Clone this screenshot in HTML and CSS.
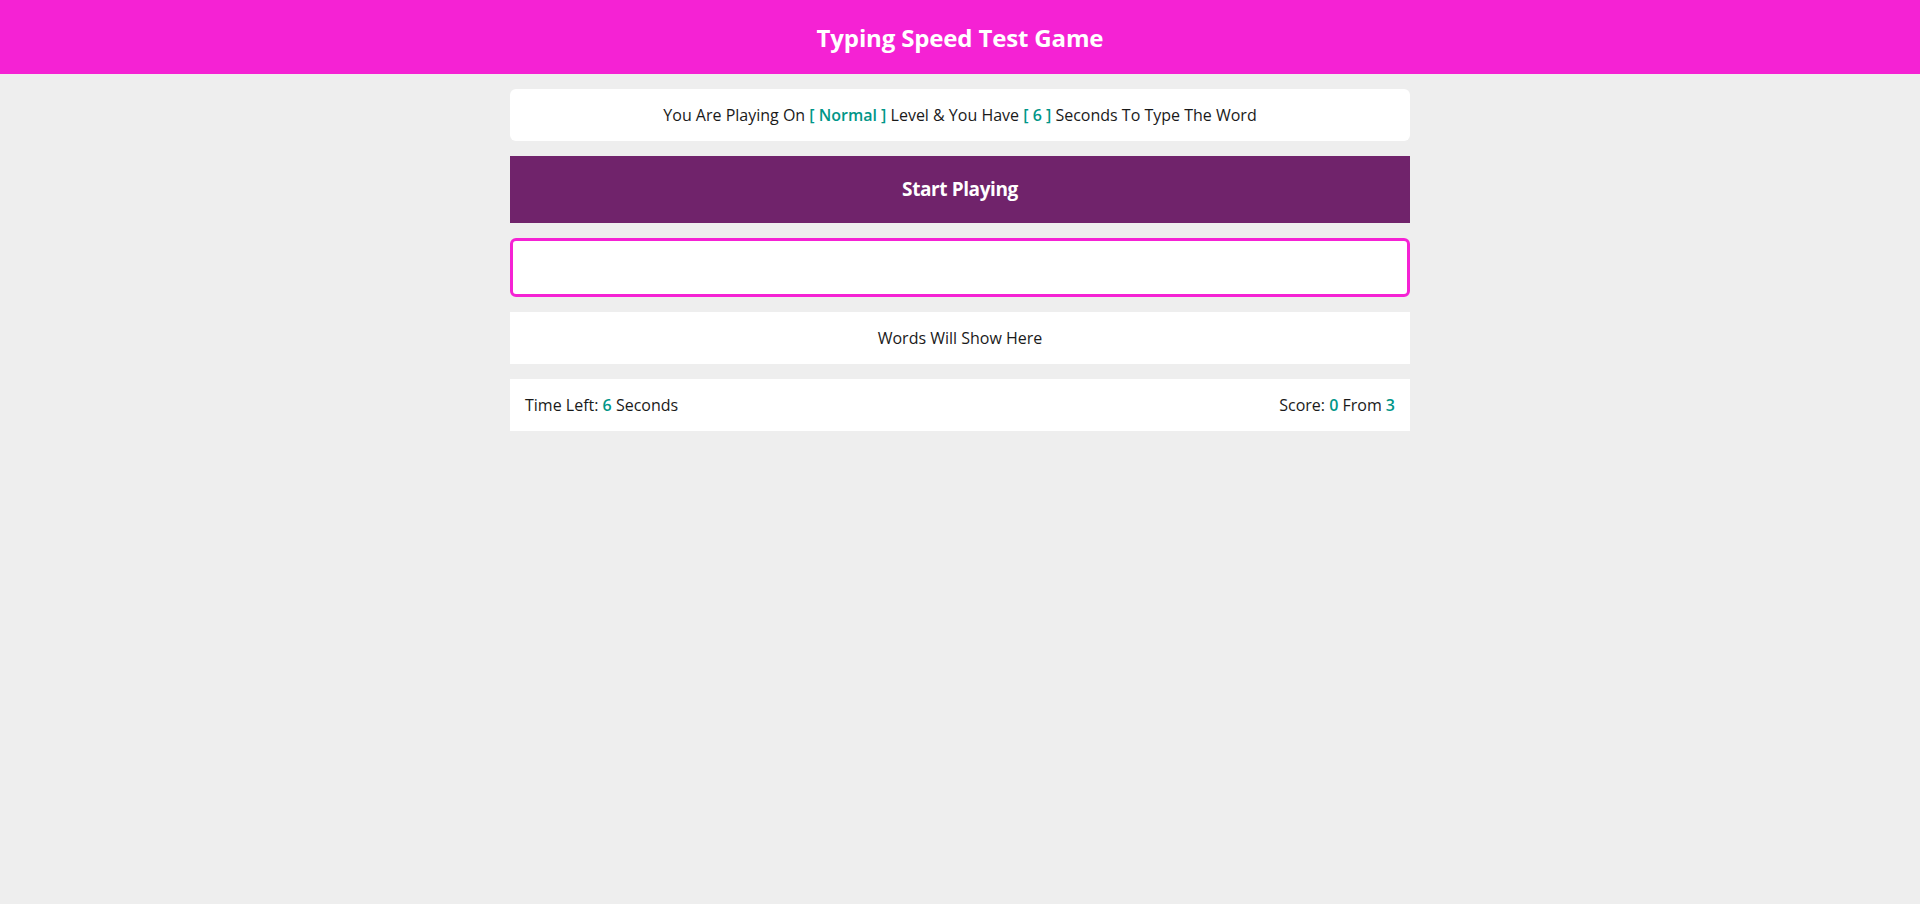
FILE: index.html
```html
<!DOCTYPE html>
<html lang="en">
<head>
<meta charset="utf-8">
<title>Typing Speed Test Game</title>
<link rel="stylesheet" href="styles.css">
</head>
<body>
<header class="top">
  <h1 class="title">Typing Speed Test Game</h1>
</header>
<main class="game">
  <div class="message">You Are Playing On <span class="hl">[ Normal ]</span> Level &amp; You Have <span class="hl">[ 6 ]</span> Seconds To Type The Word</div>
  <div class="start">Start Playing</div>
  <input class="input" type="text">
  <div class="words">Words Will Show Here</div>
  <div class="control">
    <div class="time">Time Left: <span class="hl">6</span> Seconds</div>
    <div class="score">Score: <span class="hl">0</span> From <span class="hl">3</span></div>
  </div>
</main>
</body>
</html>
```

FILE: styles.css
```css
* { box-sizing: border-box; }
body {
  margin: 0;
  background: #eeeeee;
  font-family: "Open Sans", "Liberation Sans", sans-serif;
  color: #1a1a1a;
  font-size: 16px;
}
.top {
  background: #f522d4;
  height: 74px;
  display: flex;
  align-items: center;
  justify-content: center;
}
.title {
  margin: 0;
  color: #fff;
  font-size: 24px;
  font-weight: 700;
  letter-spacing: -0.15px;
}
.game {
  width: 900px;
  margin: 15px auto;
  display: flex;
  flex-direction: column;
  gap: 15px;
}
.hl { color: #009688; font-weight: 600; }
.message {
  background: #fff;
  border-radius: 6px;
  padding: 15px;
  line-height: 22px;
  text-align: center;
}
.start {
  background: #70236b;
  color: #fff;
  font-size: 19px;
  font-weight: 700;
  letter-spacing: -0.4px;
  line-height: 27px;
  padding: 20px;
  text-align: center;
}
.input {
  display: block;
  width: 100%;
  height: 59px;
  border: 3px solid #f522d4;
  border-radius: 6px;
  background: #fff;
  outline: none;
  margin: 0;
}
.words {
  background: #fff;
  padding: 15px;
  line-height: 22px;
  text-align: center;
}
.control {
  background: #fff;
  padding: 15px;
  line-height: 22px;
  display: flex;
  justify-content: space-between;
}
```
